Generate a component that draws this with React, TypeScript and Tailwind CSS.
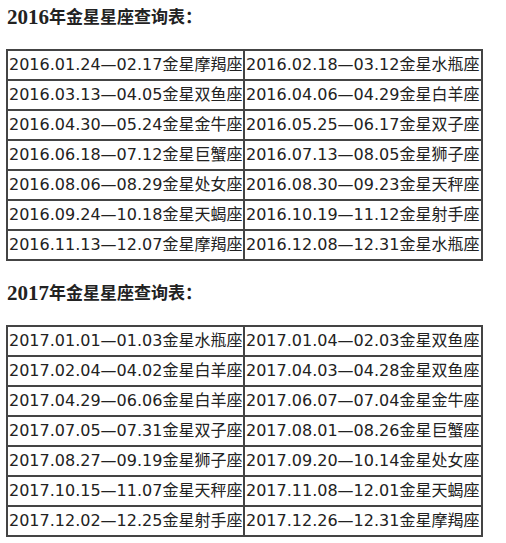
const tables = [
  {
    year: "2016",
    rows: [
      ["2016.01.24—02.17金星摩羯座", "2016.02.18—03.12金星水瓶座"],
      ["2016.03.13—04.05金星双鱼座", "2016.04.06—04.29金星白羊座"],
      ["2016.04.30—05.24金星金牛座", "2016.05.25—06.17金星双子座"],
      ["2016.06.18—07.12金星巨蟹座", "2016.07.13—08.05金星狮子座"],
      ["2016.08.06—08.29金星处女座", "2016.08.30—09.23金星天秤座"],
      ["2016.09.24—10.18金星天蝎座", "2016.10.19—11.12金星射手座"],
      ["2016.11.13—12.07金星摩羯座", "2016.12.08—12.31金星水瓶座"],
    ],
  },
  {
    year: "2017",
    rows: [
      ["2017.01.01—01.03金星水瓶座", "2017.01.04—02.03金星双鱼座"],
      ["2017.02.04—04.02金星白羊座", "2017.04.03—04.28金星双鱼座"],
      ["2017.04.29—06.06金星白羊座", "2017.06.07—07.04金星金牛座"],
      ["2017.07.05—07.31金星双子座", "2017.08.01—08.26金星巨蟹座"],
      ["2017.08.27—09.19金星狮子座", "2017.09.20—10.14金星处女座"],
      ["2017.10.15—11.07金星天秤座", "2017.11.08—12.01金星天蝎座"],
      ["2017.12.02—12.25金星射手座", "2017.12.26—12.31金星摩羯座"],
    ],
  },
];

const Section = ({ year, rows, first }: { year: string; rows: string[][]; first: boolean }) => (
  <div className={first ? "" : "mt-[15px]"}>
    <div className="h-[34px] flex items-center pl-[7px] font-bold text-[17px] text-[#222] font-['Liberation_Serif','Noto_Sans_CJK_SC',serif]">
      <span className="text-[21px] leading-none">{year}</span>
      <span className="leading-none">年金星星座查询表：</span>
    </div>
    <div className="mt-[15px] ml-[6px] w-[477px] border-2 border-[#444] grid grid-cols-[237px_1fr] font-['DejaVu_Sans','Noto_Sans_CJK_SC',sans-serif] text-[16px] text-[#222]">
      {rows.map((row, i) =>
        row.map((cell, j) => (
          <div
            key={`${i}-${j}`}
            className={`h-[28px] flex items-center pl-[1px] whitespace-nowrap border-[#444] ${
              j === 0 ? "border-r-2" : ""
            } ${i < rows.length - 1 ? "border-b-2 h-[30px]" : ""}`}
          >
            {cell}
          </div>
        ))
      )}
    </div>
  </div>
);

export default function App() {
  return (
    <div className="w-[506px] h-[543px] bg-white overflow-hidden">
      {tables.map((t, i) => (
        <Section key={t.year} year={t.year} rows={t.rows} first={i === 0} />
      ))}
    </div>
  );
}
